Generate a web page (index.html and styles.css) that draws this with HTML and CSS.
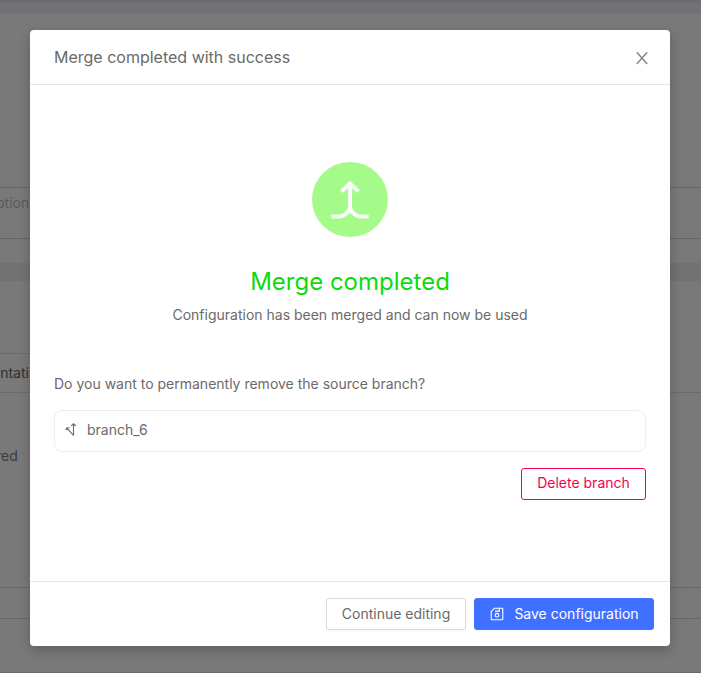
FILE: index.html
```html
<!DOCTYPE html>
<html lang="en">
<head>
<meta charset="utf-8">
<title>Merge completed</title>
<link rel="stylesheet" href="styles.css">
</head>
<body>
<main class="page" aria-hidden="true">
  <div class="band band-top"></div>
  <div class="space-top"></div>
  <div class="field"><span>ption</span></div>
  <div class="space-field"></div>
  <div class="band band-middle"></div>
  <div class="space-tabs"></div>
  <div class="tabs"><span class="tab">entati</span></div>
  <div class="content"><span>red</span></div>
  <div class="strip"></div>
  <div class="rest"></div>
</main>
<div class="overlay">
  <section class="modal" role="dialog" aria-modal="true" aria-labelledby="title">
    <header class="modal-header">
      <h1 id="title">Merge completed with success</h1>
      <button class="close" aria-label="Close">
        <svg width="14" height="14" viewBox="0 0 14 14" fill="none" stroke="currentColor" stroke-width="1.5"><path d="M1.8 1.3 12.2 12.9M12.2 1.3 1.8 12.9"/></svg>
      </button>
    </header>
    <div class="modal-body">
      <div class="result">
        <div class="result-icon">
          <svg width="40" height="40" viewBox="0 0 40 40" fill="none" stroke="currentColor" stroke-width="4"><path d="M20 3.5V26C20 31 15 36.5 9 36.5H1.3M20 26C20 31 25 36.5 31 36.5H38.7M11.5 11.5 20 3.5 28.5 11.5"/></svg>
        </div>
        <h2>Merge completed</h2>
        <p>Configuration has been merged and can now be used</p>
      </div>
      <p class="question">Do you want to permanently remove the source branch?</p>
      <div class="branch">
        <svg width="14" height="14" viewBox="0 0 14 14" fill="none" stroke="currentColor" stroke-width="1.1"><path d="M8.5 12.5V1M6.2 2.8 8.5.8l2.3 2M8.5 12.3 1.8 5.2M1 7.2 1.6 5l3-.3"/></svg>
        <span>branch_6</span>
      </div>
      <button class="button button-danger">Delete branch</button>
    </div>
    <footer class="modal-footer">
      <button class="button">Continue editing</button>
      <button class="button button-primary">
        <svg width="14" height="14" viewBox="0 0 14 14" fill="none" stroke="currentColor" stroke-width="1.1"><path d="M4.5 1.2H12a.8.8 0 0 1 .8.8v10a.8.8 0 0 1-.8.8H2a.8.8 0 0 1-.8-.8V4.5zM5 4.1h4.3V1.2"/><circle cx="7" cy="8.2" r="1.8"/></svg>
        <span>Save configuration</span>
      </button>
    </footer>
  </section>
</div>
</body>
</html>
```
FILE: styles.css
```css
* { box-sizing: border-box; }
body {
  margin: 0;
  height: 673px;
  overflow: hidden;
  font: 400 14px/22px Inter, "Liberation Sans", sans-serif;
  color: #6a6a6a;
}
h1, h2, p { margin: 0; font-weight: 400; }
button { font: inherit; color: inherit; cursor: pointer; }
svg { display: block; flex: none; }

.page {
  display: flex;
  flex-direction: column;
  height: 673px;
  background: #797979;
  border-bottom: 1px solid #686868;
  color: #3b3b3b;
  white-space: nowrap;
}
.band { background: #707274; }
.band-top { height: 14px; background: linear-gradient(#686a6d, #707275 4px); }
.space-top { height: 173px; }
.field {
  height: 52px;
  padding-top: 4px;
  border: solid #646464;
  border-width: 1px 0;
  color: #595959;
}
.field span { margin-left: -4px; }
.space-field { height: 24px; }
.band-middle { height: 18px; }
.space-tabs { height: 72px; }
.tabs {
  height: 40px;
  border-bottom: 1px solid #6b6b6b;
}
.tab {
  display: block;
  width: 31px;
  height: 39px;
  padding-top: 8px;
  border-top: 1px solid #6b6b6b;
  text-indent: -8px;
  color: #303030;
}
.content { height: 194px; padding-top: 52px; }
.content span { margin-left: -4px; }
.strip { height: 32px; border: solid #666; border-width: 1px 0; }

.overlay {
  position: absolute;
  inset: 0;
  padding: 30px;
  overflow: hidden;
}
.modal {
  display: flex;
  flex-direction: column;
  width: 640px;
  height: 616px;
  background: #fff;
  border-radius: 4px;
  box-shadow: 0 4px 12px rgba(0, 0, 0, .22);
}
.modal-header {
  display: flex;
  align-items: center;
  justify-content: space-between;
  height: 55px;
  padding: 0 21px 0 24px;
  border-bottom: 1px solid #e6e6e6;
}
.modal-header h1 { font-size: 16px; line-height: 24px; }
.close { margin-top: 2px; padding: 0; border: 0; background: none; color: #888; }
.modal-body {
  display: flex;
  flex-direction: column;
  flex: 1;
  padding: 77px 24px 0;
}
.result { display: flex; flex-direction: column; align-items: center; }
.result-icon {
  display: grid;
  place-items: center;
  width: 76px;
  height: 75px;
  border-radius: 50%;
  background: #a4fb89;
  color: #fafafa;
}
.result h2 {
  margin-top: 29px;
  font-size: 24px;
  line-height: 32px;
  color: #0ddb0d;
}
.result p { margin-top: 6px; }
.question { margin-top: 47px; }
.branch {
  display: flex;
  align-items: center;
  gap: 8px;
  height: 42px;
  margin-top: 15px;
  padding: 0 10px 2px;
  border: 1px solid #eee;
  border-radius: 8px;
}
.button {
  display: flex;
  align-items: center;
  justify-content: center;
  gap: 10px;
  height: 32px;
  padding: 0;
  border: 1px solid #d9d9d9;
  border-radius: 3px;
  background: #fff;
  box-shadow: 0 2px 0 rgba(0, 0, 0, .016);
  white-space: nowrap;
}
.button-danger {
  align-self: flex-end;
  width: 125px;
  margin-top: 16px;
  padding-bottom: 2px;
  border-color: #f5004f;
  color: #f5004f;
}
.modal-footer {
  display: flex;
  justify-content: flex-end;
  gap: 8px;
  height: 65px;
  padding: 16px 16px 0;
  border-top: 1px solid #e6e6e6;
}
.modal-footer .button { width: 140px; }
.modal-footer .button-primary {
  width: 180px;
  padding-left: 1px;
  border-color: #4070ff;
  background: #4070ff;
  color: #fff;
}
```
